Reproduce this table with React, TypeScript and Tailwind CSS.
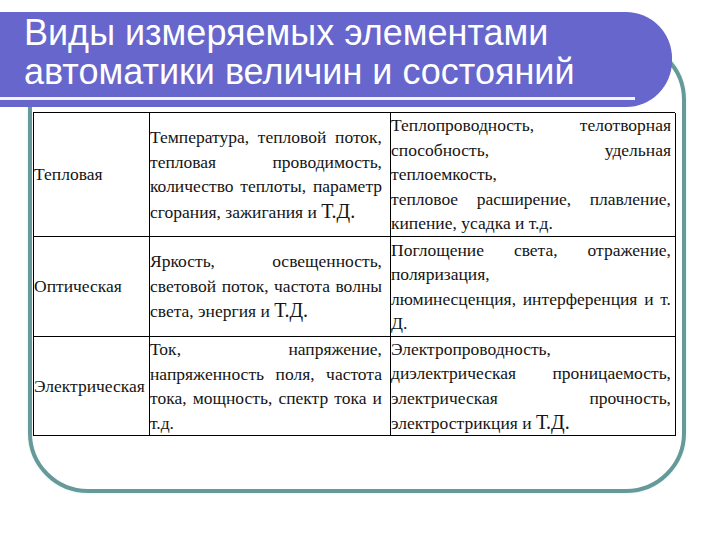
type Line = { text: React.ReactNode; justify?: boolean }

const J = (text: React.ReactNode): Line => ({ text, justify: true })
const L = (text: React.ReactNode): Line => ({ text })

const TD = ({ children }: { children: React.ReactNode }) => (
  <span className="text-[20px]">{children}</span>
)

interface Row {
  kind: string
  values: Line[]
  effects: Line[]
  height: string
}

const rows: Row[] = [
  {
    kind: 'Тепловая',
    values: [
      J('Температура, тепловой поток,'),
      J('тепловая проводимость,'),
      J('количество теплоты, параметр'),
      L(<>сгорания, зажигания и <TD>Т.Д.</TD></>),
    ],
    effects: [
      J('Теплопроводность, телотворная'),
      J('способность, удельная'),
      L('теплоемкость,'),
      J('тепловое расширение, плавление,'),
      L('кипение, усадка и т.д.'),
    ],
    height: 'h-[124px]',
  },
  {
    kind: 'Оптическая',
    values: [
      J('Яркость, освещенность,'),
      J('световой поток, частота волны'),
      L(<>света, энергия и <TD>Т.Д.</TD></>),
    ],
    effects: [
      J('Поглощение света, отражение,'),
      L('поляризация,'),
      J('люминесценция, интерференция и т.'),
      L('Д.'),
    ],
    height: 'h-[100px]',
  },
  {
    kind: 'Электрическая',
    values: [
      J('Ток, напряжение,'),
      J('напряженность поля, частота'),
      J('тока, мощность, спектр тока и'),
      L('т.д.'),
    ],
    effects: [
      L('Электропроводность,'),
      J('диэлектрическая проницаемость,'),
      J('электрическая прочность,'),
      L(<>электрострикция и <TD>Т.Д.</TD></>),
    ],
    height: 'h-[99px]',
  },
]

function Lines({ lines }: { lines: Line[] }) {
  return (
    <div className="w-full">
      {lines.map((l, i) => (
        <div
          key={i}
          className={l.justify ? 'whitespace-nowrap text-justify [text-align-last:justify]' : 'whitespace-nowrap text-left'}
        >
          {l.text}
        </div>
      ))}
    </div>
  )
}

export default function App() {
  return (
    <div className="w-[720px] h-[540px] overflow-hidden bg-white pt-[12px]">
      {/* Title bar */}
      <div className="relative z-10 w-[672px] h-[95px] bg-[#6666cc] rounded-r-[46px] pt-[1px]">
        <h1 className="pl-[24px] text-white text-[36px] leading-[39px] font-['Liberation_Sans']">
          Виды измеряемых элементами
          <br />
          автоматики величин и состояний
        </h1>
        <div className="mt-[6px] w-[635px] h-[3px] bg-[#f4f4ff]" />
      </div>

      {/* Frame */}
      <div className="-mt-[67px] ml-[28px] w-[658px] h-[453px] rounded-[60px] border-4 border-[#669999] shadow-[0_0_3px_#d8f0f0] pt-[68px] pl-[1px]">
        <div className="grid grid-cols-[116px_241px_285px] w-[642px] border-t border-l border-black bg-white text-[#141414] text-[17.5px] leading-[24.5px] font-['Liberation_Serif']">
          {rows.map((r) => (
            <div key={r.kind} className="contents">
              <div className={`${r.height} flex items-center border-r border-b border-black whitespace-nowrap`}>
                {r.kind}
              </div>
              <div className={`${r.height} flex items-center border-r border-b border-black pr-[8px]`}>
                <Lines lines={r.values} />
              </div>
              <div className={`${r.height} flex items-center border-r border-b border-black pr-[4px]`}>
                <Lines lines={r.effects} />
              </div>
            </div>
          ))}
        </div>
      </div>
    </div>
  )
}
